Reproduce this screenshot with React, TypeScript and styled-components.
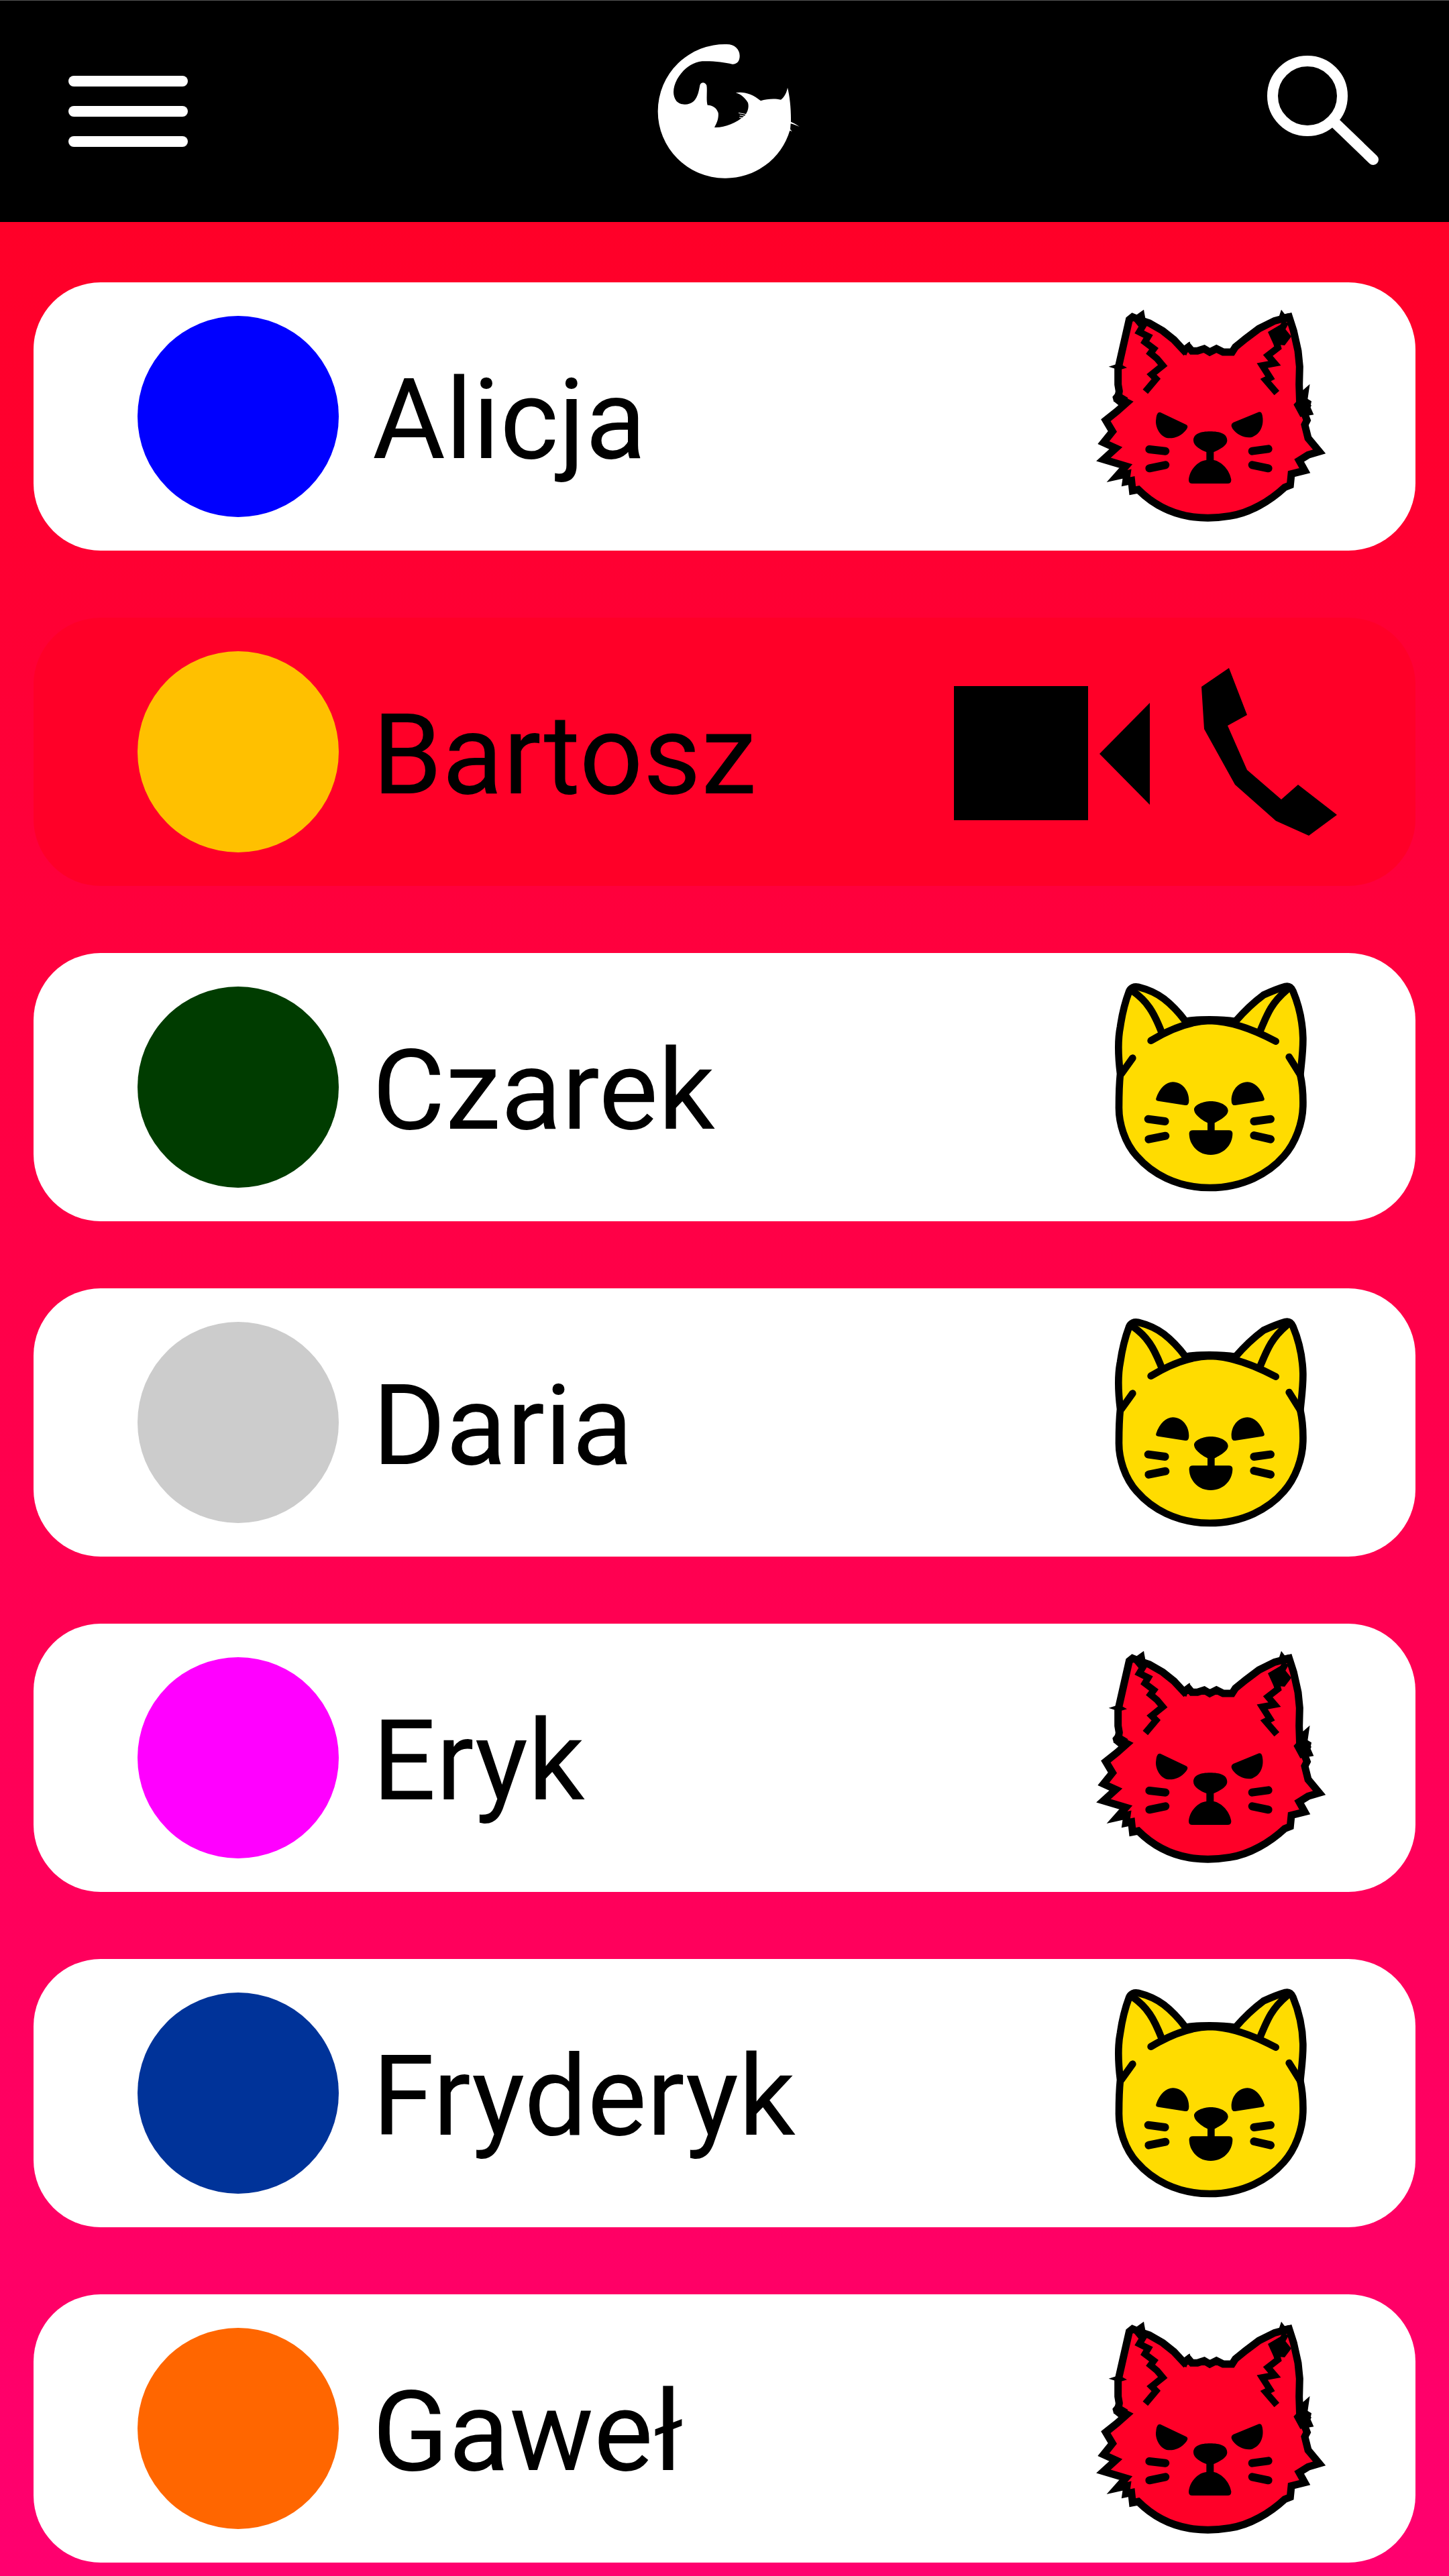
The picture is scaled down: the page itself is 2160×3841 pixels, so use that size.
import React from "react";
import styled, { createGlobalStyle } from "styled-components";

const GlobalStyle = createGlobalStyle`
  html, body {
    margin: 0;
    padding: 0;
    background: #ff006f;
  }
`;

const Page = styled.div`
  width: 2160px;
  min-height: 3841px;
  display: flex;
  flex-direction: column;
  font-family: Roboto, "Liberation Sans", sans-serif;
`;

const Header = styled.header`
  box-sizing: border-box;
  height: 331px;
  padding: 39px 60px 0;
  display: grid;
  grid-template-columns: 1fr auto 1fr;
  align-items: start;
  background: #000;
  border-top: 1px solid #555;
`;

const HeaderIcon = styled.svg<{ $end?: boolean }>`
  display: block;
  justify-self: ${(p) => (p.$end ? "end" : "start")};
  fill: #fff;
`;

const List = styled.main`
  flex: 1;
  display: flex;
  flex-direction: column;
  gap: 100px;
  padding: 90px 50px 20px;
  background: linear-gradient(180deg, #ff0028 0%, #ff006f 100%);
`;

const Card = styled.div<{ $active?: boolean }>`
  box-sizing: border-box;
  height: 400px;
  padding: 0 0 0 155px;
  display: flex;
  align-items: center;
  border-radius: 100px;
  background: ${(p) => (p.$active ? "#ff0028" : "#fff")};
`;

const Avatar = styled.div<{ $color: string }>`
  flex: none;
  width: 300px;
  height: 300px;
  border-radius: 50%;
  background: ${(p) => p.$color};
`;

const Name = styled.span`
  flex: 1;
  margin-left: 50px;
  padding-top: 10px;
  font-size: 167px;
  font-weight: 400;
  color: #000;
`;

const CallActions = styled.div`
  display: flex;
  align-items: center;
  gap: 77px;
  margin-right: 117px;
`;

const Glyph = styled.svg<{ $nudge?: number }>`
  display: block;
  fill: #000;
  margin-top: ${(p) => p.$nudge ?? 0}px;
`;

const Mood = styled.svg<{ $angry?: boolean }>`
  display: block;
  flex: none;
  margin-right: ${(p) => (p.$angry ? "110px" : "130px")};
  margin-bottom: ${(p) => (p.$angry ? "12px" : "0")};
`;

const MenuIcon = () => (
  <HeaderIcon width="260" height="240" viewBox="0 0 260 240">
    <rect x="42" y="73" width="178" height="16" rx="8" />
    <rect x="42" y="118" width="178" height="16" rx="8" />
    <rect x="42" y="163" width="178" height="16" rx="8" />
  </HeaderIcon>
);

const Logo = () => (
  <HeaderIcon width="280" height="240" viewBox="0 0 840 720">
    <path d="M430 78 C465 78 488 100 488 130 C488 155 475 168 455 167 C420 158 365 152 320 154 C270 160 230 195 208 235 C190 270 185 305 205 332 C225 352 260 352 283 332 C303 312 306 280 310 262 C313 248 332 244 340 262 C344 285 337 325 344 350 C365 350 385 362 392 385 C395 410 385 432 375 450 C420 452 470 432 512 396 C525 378 530 360 525 340 C512 318 495 302 470 295 C500 288 545 298 582 331 C610 322 645 320 672 326 C690 312 698 292 702 272 C712 310 718 370 717 425 C730 430 745 438 755 447 C742 441 728 436 716 433 L714 458 L722 468 L712 464 A298 298 0 0 1 420 677 A299 299 0 0 1 122 378 A300 300 0 0 1 430 78 Z" />
    <path d="M483 385 L518 392 M488 395 L512 400 M486 405 L505 408" stroke="#fff" strokeWidth="3" fill="none" />
  </HeaderIcon>
);

const SearchIcon = () => (
  <HeaderIcon $end width="300" height="240" viewBox="0 0 300 240">
    <circle cx="149" cy="103" r="52" fill="none" stroke="#fff" strokeWidth="16" />
    <path d="M192 145 L247 198" fill="none" stroke="#fff" strokeWidth="16" strokeLinecap="round" />
  </HeaderIcon>
);

const VideoIcon = () => (
  <Glyph $nudge={4} width="292" height="200" viewBox="0 0 292 200">
    <rect x="0" y="0" width="200" height="200" />
    <polygon points="217,101 292,25 292,177" />
  </Glyph>
);

const PhoneIcon = () => (
  <Glyph width="202" height="250" viewBox="0 0 202 250">
    <polygon points="41,0 0,28 4,91 50,174 111,228 160,250 202,219 144,174 119,196 68,152 39,86 68,70" />
  </Glyph>
);

const HappyCat = () => (
  <Mood width="360" height="360" viewBox="0 0 1080 1080">
    <path
      d="M150 480 C140 400 140 320 150 270 C160 200 175 150 190 110 C197 95 212 88 230 92 C270 102 310 118 345 145 C380 172 415 210 442 246 C480 238 510 238 550 238 C590 238 630 240 665 246 C700 205 740 165 790 128 C825 112 860 98 888 90 C905 86 915 95 922 110 C945 165 965 240 967 320 C968 380 960 430 955 485 C965 530 968 580 967 625 C965 700 935 790 880 850 C815 925 700 990 550 990 C400 990 290 925 225 850 C170 790 142 700 144 625 C144 580 145 530 150 480 Z"
      fill="#ffdc00"
      stroke="#000"
      strokeWidth="32"
      strokeLinejoin="round"
    />
    <g fill="none" stroke="#000" strokeWidth="32" strokeLinecap="round" strokeLinejoin="round">
      <path d="M287 332 C340 300 440 245 550 243 C660 245 770 295 845 335" />
      <path d="M205 110 C270 155 300 205 335 295" />
      <path d="M895 105 C830 160 810 205 775 290" />
      <path d="M205 410 L155 480" />
      <path d="M905 405 L955 485" />
    </g>
    <g fill="#000">
      <path d="M310 590 C325 545 355 517 385 517 C430 517 458 560 457 600 Q457 624 440 621 L320 602 Q307 600 310 590 Z" />
      <path d="M794 590 C779 545 749 517 719 517 C674 517 646 560 647 600 Q647 624 664 621 L784 602 Q797 600 794 590 Z" />
      <path d="M480 640 C480 620 520 603 555 603 C590 603 632 620 632 645 C632 670 590 690 572 700 L572 735 L540 735 L540 700 C520 690 480 665 480 640 Z" />
      <path d="M458 748 Q458 733 475 733 L635 733 Q652 733 652 748 C652 800 610 843 555 843 C500 843 458 800 458 748 Z" />
    </g>
    <g fill="none" stroke="#000" strokeWidth="36" strokeLinecap="round">
      <path d="M275 683 L350 693" />
      <path d="M277 773 L352 758" />
      <path d="M748 693 L822 683" />
      <path d="M748 756 L822 773" />
    </g>
  </Mood>
);

const AngryCat = () => (
  <Mood $angry width="400" height="370" viewBox="0 0 1200 1110">
    <path
      d="M265 128 L295 140 L340 155 L400 190 L450 230 L495 278 L515 262 L530 280 L555 280 L585 270 L610 285 L640 270 L670 285 L710 285 L725 262 L770 225 L830 180 L900 145 L965 128 L985 190 L1005 280 L1012 350 L1010 430 L1012 490 L1035 470 L1030 505 L1045 525 L1030 550 L1045 590 L1035 610 L1050 670 L1100 730 L1050 745 L1010 770 L1035 815 L975 830 L970 880 L945 890 C880 950 790 1005 700 1018 C640 1028 570 1028 520 1020 C430 1005 350 960 290 900 L265 905 L260 860 L235 865 L240 830 L195 840 L235 795 L135 765 L190 715 L135 690 L175 640 L145 590 L195 550 L240 510 L200 490 L205 460 L200 430 L200 360 L225 250 L250 140 Z"
      fill="#ff0028"
      stroke="#000"
      strokeWidth="33"
      strokeLinejoin="miter"
      strokeMiterlimit="6"
    />
    <path
      d="M285 140 L310 170 L295 195 L335 215 L320 240 L360 270 L345 290 L375 315 L400 345 L350 385 L370 405 L322 462"
      fill="none"
      stroke="#000"
      strokeWidth="30"
      strokeLinejoin="miter"
    />
    <path
      d="M950 150 L905 230 L915 265 L870 300 L900 335 L845 345 L880 400 L860 410 L910 468"
      fill="none"
      stroke="#000"
      strokeWidth="30"
      strokeLinejoin="miter"
    />
    <g fill="#000">
      <polygon points="870,195 930,160 975,215 945,255 895,250" />
      <polygon points="280,120 315,95 325,150 290,160" />
      <polygon points="920,125 930,95 945,115 965,110 960,150 925,150" />
      <polygon points="158,350 205,335 240,355 205,365" />
      <polygon points="175,485 195,460 245,490 205,525 180,505" />
      <polygon points="1050,440 1030,470 985,520 1015,575 1075,565 1060,530 1065,505 1040,490" />
      <polygon points="490,260 522,238 520,265 505,300 485,290" />
      <path d="M390 555 L505 610 Q517 617 505 632 C480 665 440 675 415 668 C380 655 365 610 370 585 C372 560 380 552 390 555 Z" />
      <path d="M830 553 L715 600 Q700 610 712 628 C735 660 775 672 800 665 C840 650 850 610 847 580 C845 558 840 550 830 553 Z" />
      <path d="M516 855 C520 810 560 770 595 768 L595 732 C570 722 537 705 537 680 C537 650 570 640 612 640 C655 640 688 650 688 680 C688 705 650 722 628 732 L628 768 C665 775 700 815 706 855 Q707 873 690 873 L532 873 Q515 873 516 855 Z" />
    </g>
    <g fill="none" stroke="#000" strokeWidth="36" strokeLinecap="round">
      <path d="M340 720 L412 728" />
      <path d="M340 805 L412 790" />
      <path d="M800 728 L872 718" />
      <path d="M800 790 L872 805" />
    </g>
  </Mood>
);

const contacts = [
  { name: "Alicja", color: "#0000ff", status: "angry" },
  { name: "Bartosz", color: "#ffc000", status: "call" },
  { name: "Czarek", color: "#003c00", status: "happy" },
  { name: "Daria", color: "#cccccc", status: "happy" },
  { name: "Eryk", color: "#ff00ff", status: "angry" },
  { name: "Fryderyk", color: "#003399", status: "happy" },
  { name: "Gaweł", color: "#ff6600", status: "angry" },
];

export default function App() {
  return (
    <Page>
      <GlobalStyle />
      <Header>
        <MenuIcon />
        <Logo />
        <SearchIcon />
      </Header>
      <List>
        {contacts.map((contact) => (
          <Card key={contact.name} $active={contact.status === "call"}>
            <Avatar $color={contact.color} />
            <Name>{contact.name}</Name>
            {contact.status === "call" && (
              <CallActions>
                <VideoIcon />
                <PhoneIcon />
              </CallActions>
            )}
            {contact.status === "happy" && <HappyCat />}
            {contact.status === "angry" && <AngryCat />}
          </Card>
        ))}
      </List>
    </Page>
  );
}
